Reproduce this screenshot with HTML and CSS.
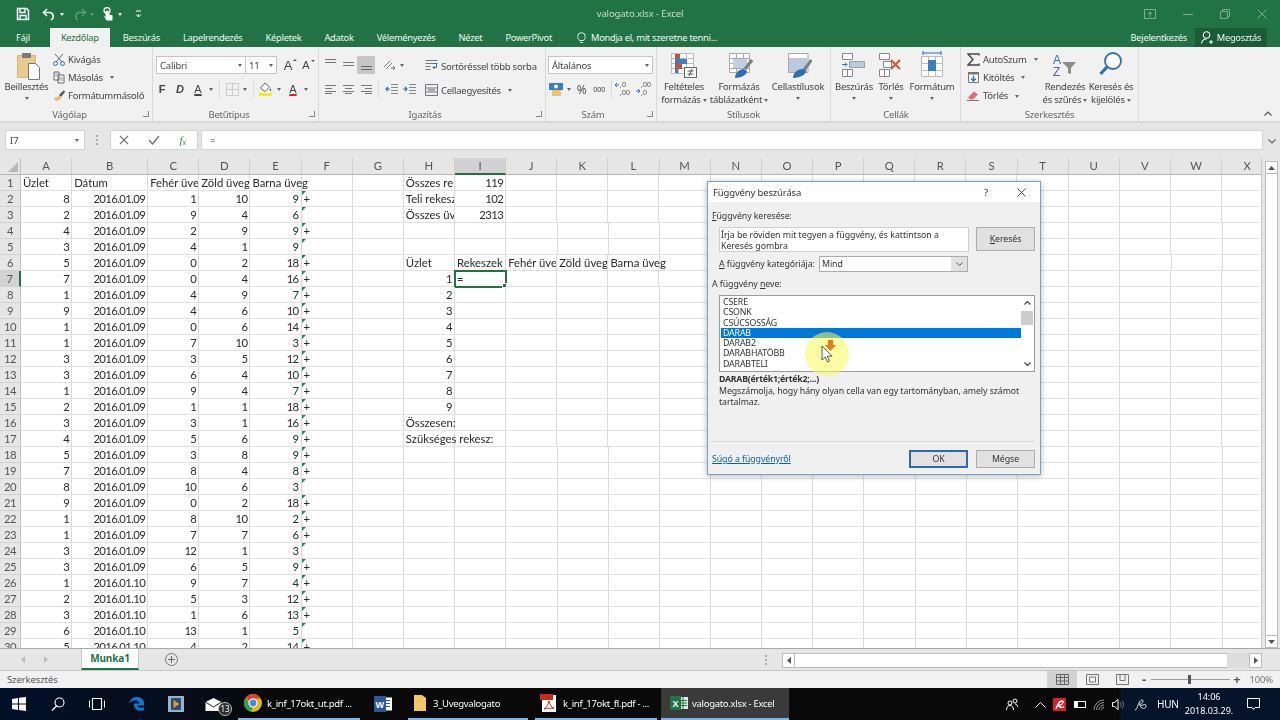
FILE: index.html
```html
<!DOCTYPE html>
<html lang="hu">
<head>
<meta charset="utf-8">
<title>valogato.xlsx - Excel</title>
<link rel="stylesheet" href="styles.css">
</head>
<body>
<div class="excel">
  <header class="titlebar">
    <div class="qat">
      <svg width="14" height="14" viewBox="0 0 14 14"><path d="M1.5 1.5h9l2 2v9h-11z" fill="none" stroke="#fff" stroke-width="1.5"/><path d="M4 1.5v4h5v-4M4 12.5v-4h6v4" fill="none" stroke="#fff" stroke-width="1.3"/></svg>
      <svg class="q1" width="14" height="13" viewBox="0 0 14 13"><path d="M5 1 1.5 4.5 5 8" fill="none" stroke="#fff" stroke-width="1.6"/><path d="M2 4.5h6a4 4 0 0 1 1 7.5" fill="none" stroke="#fff" stroke-width="1.6"/></svg>
      <i class="caret w"></i>
      <svg class="q2" width="14" height="13" viewBox="0 0 14 13"><path d="M9 1l3.5 3.5L9 8" fill="none" stroke="#5d9a78" stroke-width="1.5"/><path d="M12 4.5H6a4 4 0 0 0-1 7.5" fill="none" stroke="#5d9a78" stroke-width="1.5"/></svg>
      <i class="caret dim"></i>
      <svg class="q3" width="12" height="15" viewBox="0 0 12 15"><circle cx="5" cy="3.5" r="3" fill="none" stroke="#fff" stroke-width="1.3"/><path d="M3.5 4v6l-2-1.5 3 5h6V8.5L6.5 7V3.5" fill="#fff"/></svg>
      <i class="caret w"></i>
      <svg class="q4" width="7" height="8" viewBox="0 0 7 8"><path d="M1 1h5M3.5 4v3M1 4.5 3.5 7 6 4.5" fill="none" stroke="#fff"/></svg>
    </div>
    <div class="doc-title">valogato.xlsx - Excel</div>
    <div class="winbtns">
      <svg width="12" height="10" viewBox="0 0 12 10"><path d="M.5.5h11v9H.5zM6 8V3M4 5l2-2 2 2" fill="none" stroke="#7fae95"/></svg>
      <svg width="10" height="10" viewBox="0 0 10 10"><path d="M0 5.5h10" stroke="#7fae95"/></svg>
      <svg width="10" height="10" viewBox="0 0 10 10"><path d="M.5 2.5h7v7h-7zM2.5 2.5v-2h7v7h-2" fill="none" stroke="#7fae95"/></svg>
      <svg width="10" height="10" viewBox="0 0 10 10"><path d="M.5.5l9 9M9.5.5l-9 9" fill="none" stroke="#7fae95"/></svg>
    </div>
  </header>

  <nav class="tabs">
    <span class="tab t-file">Fájl</span>
    <span class="tab t-active">Kezdőlap</span>
    <span class="tab">Beszúrás</span>
    <span class="tab">Lapelrendezés</span>
    <span class="tab">Képletek</span>
    <span class="tab">Adatok</span>
    <span class="tab">Véleményezés</span>
    <span class="tab">Nézet</span>
    <span class="tab">PowerPivot</span>
    <span class="tab t-tell"><svg width="9" height="12" viewBox="0 0 9 12"><path d="M2.5 8.5C1.5 7 .7 6.2.7 4.5a3.8 3.8 0 0 1 7.6 0c0 1.700-.8 2.500-1.800 4zM3 10.500h3" fill="none" stroke="#fff" stroke-width=".9"/></svg>Mondja el, mit szeretne tenni...</span>
    <span class="tab t-login">Bejelentkezés</span>
    <span class="tab t-share"><svg width="12" height="13" viewBox="0 0 12 13"><circle cx="5.500" cy="4" r="3.200" fill="none" stroke="#fff" stroke-width="1.100"/><path d="M.5 12.500c.5-3 2-4.500 5-4.500M8 11h4M10 9v4" fill="none" stroke="#fff" stroke-width="1.100"/></svg>Megosztás</span>
  </nav>

  <section class="ribbon">
    <div class="grp g1">
      <div class="body">
        <div class="big w47">
          <svg class="bi" width="26" height="30" viewBox="0 0 26 30"><rect x="3.500" y="5.500" width="18" height="22" fill="#e9c98c" stroke="#d8b877"/><rect x="8" y="3" width="9" height="5" fill="#7a7a7a"/><path d="M14.500 13.500h7l4 4v12h-11z" fill="#fff" stroke="#777"/></svg>
          <span>Beillesztés</span><i class="caret"></i>
        </div>
        <div class="col">
          <div class="sm"><svg width="12" height="13" viewBox="0 0 12 13"><path d="M2 1l7 8M10 1 3 9" stroke="#666" fill="none"/><circle cx="2.500" cy="10.500" r="2" fill="none" stroke="#2f6fb0"/><circle cx="9.500" cy="10.500" r="2" fill="none" stroke="#2f6fb0"/></svg>Kivágás</div>
          <div class="sm"><svg width="12" height="13" viewBox="0 0 12 13"><path d="M1 1h5v8H1zM5 4h6v8H5z" fill="#fff" stroke="#666"/><path d="M2 3h3M2 5h2M7 7h3M7 9h3" stroke="#8a8a8a" fill="none"/></svg>Másolás <i class="caret ml"></i></div>
          <div class="sm"><svg width="12" height="13" viewBox="0 0 12 13"><path d="M6 6 11 1l1 2-4 5z" fill="#555"/><path d="M7 7 1 9l2 3 5-2z" fill="#e9b95e"/></svg>Formátummásoló</div>
        </div>
      </div>
      <div class="foot"><span class="lbl">Vágólap</span><span class="launch"></span></div>
    </div>

    <div class="grp g2">
      <div class="body stack">
        <div class="line">
          <div class="combo fontc"><span>Calibri</span><i class="caret"></i></div>
          <div class="combo sizec"><span>11</span><i class="caret"></i></div>
          <span class="fa a1">A<i class="up"></i></span>
          <span class="fa a2">A<i class="down"></i></span>
        </div>
        <div class="line fmt">
          <b class="ic">F</b>
          <b class="ic it">D</b>
          <span class="ic u">A</span><i class="caret nw"></i>
          <i class="vsep"></i>
          <span class="ic"><svg width="13" height="13" viewBox="0 0 13 13"><path d="M.5.5h12v12H.5zM6.500.5v12M.5 6.500h12" fill="none" stroke="#aaa" stroke-dasharray="1 1"/></svg></span><i class="caret nw"></i>
          <i class="vsep"></i>
          <span class="ic"><svg width="14" height="14" viewBox="0 0 14 14"><path d="M6 1 1.500 6 6 9.500 10.500 5z" fill="#fff" stroke="#666"/><path d="M11 6c1 1.300 1.700 2.200 1 3-.8.500-1.600-.3-1-3" fill="#2f6fb0"/><rect y="11" width="13" height="3" fill="#ffea1f"/></svg></span><i class="caret nw"></i>
          <span class="ic u red">A</span><i class="caret nw"></i>
        </div>
      </div>
      <div class="foot"><span class="lbl">Betűtípus</span><span class="launch"></span></div>
    </div>

    <div class="grp g3">
      <div class="body">
        <div class="alignc">
          <div class="line">
            <span class="ic"><svg class="tl" width="11" height="9" viewBox="0 0 11 9"><path d="M0 .5h11M0 3.500h11" stroke="#777"/></svg></span>
            <span class="ic"><svg class="tl" width="11" height="9" viewBox="0 0 11 9"><path d="M0 3.500h11M0 6.500h11" stroke="#777"/></svg></span>
            <span class="ic on"><svg width="11" height="9" viewBox="0 0 11 9"><path d="M0 5.500h11M0 8.500h11" stroke="#666"/></svg></span>
            <span class="ic ori"><svg width="14" height="12" viewBox="0 0 14 12"><path d="M2 8 8 2M4 10l6-6" stroke="#777" fill="none"/><path d="M9 9h4M11 7l2 2-2 2" stroke="#777" fill="none"/></svg></span><i class="caret nw"></i>
          </div>
          <div class="line l2">
            <span class="ic"><svg width="11" height="9" viewBox="0 0 11 9"><path d="M0 .5h11M0 3.500h7M0 6.500h11M0 8.500h7" stroke="#777"/></svg></span>
            <span class="ic"><svg width="11" height="9" viewBox="0 0 11 9"><path d="M0 .5h11M2 3.500h7M0 6.500h11M2 8.500h7" stroke="#777"/></svg></span>
            <span class="ic"><svg width="11" height="9" viewBox="0 0 11 9"><path d="M0 .5h11M4 3.500h7M0 6.500h11M4 8.500h7" stroke="#777"/></svg></span>
            <i class="vsep s2"></i>
            <span class="ic"><svg width="13" height="11" viewBox="0 0 13 11"><path d="M6 .5h7M6 3.500h7M6 6.500h7M6 9.500h7" stroke="#888"/><path d="M5 5H1M3 3 1 5l2 2" stroke="#2f6fb0" fill="none" stroke-width="1.200"/></svg></span>
            <span class="ic"><svg width="13" height="11" viewBox="0 0 13 11"><path d="M6 .5h7M6 3.500h7M6 6.500h7M6 9.500h7" stroke="#888"/><path d="M0 5h4M2 3l2 2-2 2" stroke="#2f6fb0" fill="none" stroke-width="1.200"/></svg></span>
          </div>
        </div>
        <div class="wrapc">
          <div class="sm"><svg width="13" height="12" viewBox="0 0 13 12"><path d="M.5.5h12M.5 3.500h12M.5 6.500h5M.5 9.500h5" stroke="#777" fill="none"/><path d="M9 3.500h2.500v4H8M9.500 6 8 7.500 9.500 9" stroke="#2f6fb0" fill="none"/></svg>Sortöréssel több sorba</div>
          <div class="sm"><svg width="13" height="12" viewBox="0 0 13 12"><path d="M.5.5h12v11H.5zM.5 4h12M.5 8h12" stroke="#777" fill="none"/><path d="M3 6h7" stroke="#2f6fb0"/></svg>Cellaegyesítés <i class="caret ml2"></i></div>
        </div>
      </div>
      <div class="foot"><span class="lbl">Igazítás</span><span class="launch"></span></div>
    </div>

    <div class="grp g4">
      <div class="body stack">
        <div class="line"><div class="combo numc"><span>Általános</span><i class="caret"></i></div></div>
        <div class="line fmt2">
          <span class="ic"><svg width="14" height="13" viewBox="0 0 14 13"><rect width="14" height="7" fill="#3a7fc1"/><rect x="3" y="7" width="9" height="6" fill="#eec26d"/><circle cx="7" cy="3.500" r="2" fill="#fff"/></svg></span><i class="caret nw"></i>
          <span class="pct">%</span>
          <span class="th">000</span>
          <i class="vsep s3"></i>
          <span class="dec"><svg width="16" height="13" viewBox="0 0 16 13"><path d="M5 3H1M3 1 1 3l2 2" stroke="#2f6fb0" fill="none"/></svg><em>,0<br>,00</em></span>
          <span class="dec"><svg width="16" height="13" viewBox="0 0 16 13"><path d="M1 9h4M3 7l2 2-2 2" stroke="#2f6fb0" fill="none"/></svg><em>,00<br>,0</em></span>
        </div>
      </div>
      <div class="foot"><span class="lbl">Szám</span><span class="launch"></span></div>
    </div>

    <div class="grp g5">
      <div class="body">
        <div class="big w48">
          <svg class="bi" width="28" height="30" viewBox="0 0 28 30"><path d="M1.500 3.500h22v20h-22zM1.500 8.500h22M1.500 13.500h22M1.500 18.500h22M8.500 3.500v20M16.500 3.500v20" fill="#fff" stroke="#bbb"/><rect x="5" y="4" width="5" height="5" fill="#c9503f"/><rect x="5" y="9" width="12" height="5" fill="#3a7fc1"/><rect x="5" y="14" width="7" height="5" fill="#c9503f"/><rect x="5" y="19" width="3" height="4" fill="#3a7fc1"/><rect x="14.500" y="17.500" width="12" height="10" fill="#fff" stroke="#666"/><path d="M17.500 21h6M17.500 24h6M22 19l-3 7" stroke="#555" fill="none"/></svg>
          <span>Feltételes</span><span>formázás <i class="caret"></i></span>
        </div>
        <div class="big w62">
          <svg class="bi" width="28" height="30" viewBox="0 0 28 30"><path d="M4.500 3.500h20v19h-20zM4.500 8.500h20M4.500 13.500h20M4.500 18.500h20M11.500 3.500v19M18.500 3.500v19" fill="#fff" stroke="#aaa"/><rect x="8" y="9" width="14" height="9" fill="#c3cfe0"/><path d="M27 10l-7 9" stroke="#7d7d7d" stroke-width="3" fill="none"/><path d="M10 28c0-5 4-9 9-9l3 2c0 4-6 7-12 7" fill="#2f6fb0"/></svg>
          <span>Formázás</span><span>táblázatként <i class="caret"></i></span>
        </div>
        <div class="big w56">
          <svg class="bi" width="28" height="30" viewBox="0 0 28 30"><path d="M4.500 3.500h19.500v19H4.500z" fill="#fff" stroke="#aaa"/><rect x="5" y="8" width="18.500" height="14" fill="#bcc9dd"/><path d="M27.500 10 20 20" stroke="#7d7d7d" stroke-width="3" fill="none"/><path d="M9 28c0-5 4-9 10-9l3 2c0 4-7 7-13 7" fill="#2f6fb0"/></svg>
          <span>Cellastílusok</span><i class="caret"></i>
        </div>
      </div>
      <div class="foot"><span class="lbl">Stílusok</span></div>
    </div>

    <div class="grp g6">
      <div class="body">
        <div class="big w40">
          <svg class="bi" width="26" height="30" viewBox="0 0 26 30"><path d="M1.500 3.500h10v6h-10zM1.500 19.500h10v7h-10zM6.500 19.500v7" fill="#fff" stroke="#888"/><rect x="8.500" y="11.500" width="15" height="6" fill="#bcc9dd" stroke="#8aa"/><path d="M1 14.500h5M4 12.500l2 2-2 2" stroke="#2f6fb0" fill="none"/></svg>
          <span>Beszúrás</span><i class="caret"></i>
        </div>
        <div class="big w34">
          <svg class="bi" width="26" height="30" viewBox="0 0 26 30"><path d="M1.500 3.500h10v6h-10zM1.500 19.500h10v7h-10zM6.500 19.500v7M5.500 11.500h8v6h-8z" fill="#fff" stroke="#888"/><path d="M13 10l9 9M22 10l-9 9" stroke="#d9513c" stroke-width="2"/></svg>
          <span>Törlés</span><i class="caret"></i>
        </div>
        <div class="big w48b">
          <svg class="bi" width="26" height="30" viewBox="0 0 26 30"><path d="M2.500 6.500h21v20h-21zM2.500 13.500h21M2.500 20.500h21M9.500 6.500v20M16.500 6.500v20" fill="#fff" stroke="#bbb"/><rect x="9" y="10" width="8" height="11" fill="#3a7fc1"/><path d="M4 3h18M4 1v4M22 1v4" stroke="#2f6fb0" fill="none"/></svg>
          <span>Formátum</span><i class="caret"></i>
        </div>
      </div>
      <div class="foot"><span class="lbl">Cellák</span></div>
    </div>

    <div class="grp g7">
      <div class="body">
        <div class="col c7">
          <div class="sm"><svg width="13" height="13" viewBox="0 0 13 13"><path d="M12 2.500V1H1l5 5.500L1 12h11v-1.500" fill="none" stroke="#444" stroke-width="1.400"/></svg>AutoSzum <i class="caret ml3"></i></div>
          <div class="sm"><svg width="13" height="13" viewBox="0 0 13 13"><path d="M1.500 1.500h10v10h-10z" fill="#fff" stroke="#777"/><rect x="1" y="1" width="11" height="2.500" fill="#777"/><path d="M6.500 4.500v5M4 7.500l2.500 2.500L9 7.500" fill="none" stroke="#2f6fb0" stroke-width="1.400"/></svg>Kitöltés <i class="caret"></i></div>
          <div class="sm"><svg width="13" height="13" viewBox="0 0 13 13"><path d="M1 8.500 7 2.500l4 3-5 5H3.500z" fill="#e66b7a"/><path d="M0 11.500h12" stroke="#777"/></svg>Törlés <i class="caret"></i></div>
        </div>
        <div class="big w46">
          <svg class="bi" width="26" height="30" viewBox="0 0 26 30"><text x="1" y="14" class="az a">A</text><text x="1" y="26" class="az z">Z</text><path d="M10 12h14l-5 6v6l-3-1v-5z" fill="#8a8a8a"/></svg>
          <span>Rendezés</span><span>és szűrés <i class="caret"></i></span>
        </div>
        <div class="big w46">
          <svg class="bi" width="26" height="30" viewBox="0 0 26 30"><circle cx="15" cy="11" r="8" fill="#fff" stroke="#2f6fb0" stroke-width="1.800"/><path d="M9 17 2.500 24" stroke="#2f6fb0" stroke-width="3.200"/></svg>
          <span>Keresés és</span><span>kijelölés <i class="caret"></i></span>
        </div>
      </div>
      <div class="foot"><span class="lbl">Szerkesztés</span></div>
    </div>

    <div class="collapse"><svg width="8" height="5" viewBox="0 0 8 5"><path d="M.5 4.500 4 1l3.500 3.500" fill="none" stroke="#555" stroke-width="1.200"/></svg></div>
  </section>

  <section class="fbar">
    <div class="namebox"><span>I7</span><i class="caret"></i></div>
    <div class="dots"></div>
    <div class="fbtns">
      <svg width="10" height="10" viewBox="0 0 10 10"><path d="M1 1l8 8M9 1 1 9" stroke="#777" stroke-width="1.200"/></svg>
      <svg width="12" height="10" viewBox="0 0 12 10"><path d="M1 5l3.500 4L11 1" fill="none" stroke="#777" stroke-width="1.400"/></svg>
      <span class="fx">f<sub>x</sub></span>
    </div>
    <div class="finput">=</div>
    <div class="fchev"><svg width="8" height="5" viewBox="0 0 8 5"><path d="M.5.5 4 4 7.500.5" fill="none" stroke="#666" stroke-width="1.200"/></svg></div>
  </section>

  <section class="sheet">
    <div class="gridwrap">
      <div class="row head">
        <div class="rh corner"><i></i></div>
        <div class="ch">A</div><div class="ch b">B</div><div class="ch">C</div><div class="ch">D</div><div class="ch">E</div><div class="ch">F</div><div class="ch">G</div><div class="ch">H</div><div class="ch act">I</div><div class="ch">J</div><div class="ch">K</div><div class="ch">L</div><div class="ch">M</div><div class="ch">N</div><div class="ch">O</div><div class="ch">P</div><div class="ch">Q</div><div class="ch">R</div><div class="ch">S</div><div class="ch">T</div><div class="ch">U</div><div class="ch">V</div><div class="ch">W</div><div class="ch">X</div>
      </div>
      <div class="row"><div class="rh">1</div><div class="c">Üzlet</div><div class="c b">Dátum</div><div class="c clip">Fehér üveg</div><div class="c clip">Zöld üveg</div><div class="c">Barna üveg</div><div class="c"></div><div class="c"></div><div class="c clip">Összes rekesz</div><div class="c n">119</div><div class="rest"></div></div>
      <div class="row"><div class="rh">2</div><div class="c n">8</div><div class="c b n">2016.01.09</div><div class="c n">1</div><div class="c n">10</div><div class="c n">9</div><div class="c f">+</div><div class="c"></div><div class="c clip">Teli rekesz</div><div class="c n">102</div><div class="rest"></div></div>
      <div class="row"><div class="rh">3</div><div class="c n">2</div><div class="c b n">2016.01.09</div><div class="c n">9</div><div class="c n">4</div><div class="c n">6</div><div class="c f"></div><div class="c"></div><div class="c clip">Összes üveg</div><div class="c n">2313</div><div class="rest"></div></div>
      <div class="row"><div class="rh">4</div><div class="c n">4</div><div class="c b n">2016.01.09</div><div class="c n">2</div><div class="c n">9</div><div class="c n">9</div><div class="c f">+</div><div class="rest"></div></div>
      <div class="row"><div class="rh">5</div><div class="c n">3</div><div class="c b n">2016.01.09</div><div class="c n">4</div><div class="c n">1</div><div class="c n">9</div><div class="c f"></div><div class="rest"></div></div>
      <div class="row"><div class="rh">6</div><div class="c n">5</div><div class="c b n">2016.01.09</div><div class="c n">0</div><div class="c n">2</div><div class="c n">18</div><div class="c f">+</div><div class="c"></div><div class="c">Üzlet</div><div class="c">Rekeszek</div><div class="c clip">Fehér üveg</div><div class="c clip">Zöld üveg</div><div class="c">Barna üveg</div><div class="rest"></div></div>
      <div class="row"><div class="rh actr">7</div><div class="c n">7</div><div class="c b n">2016.01.09</div><div class="c n">0</div><div class="c n">4</div><div class="c n">16</div><div class="c f">+</div><div class="c"></div><div class="c n">1</div><div class="c sel">=</div><div class="rest"></div></div>
      <div class="row"><div class="rh">8</div><div class="c n">1</div><div class="c b n">2016.01.09</div><div class="c n">4</div><div class="c n">9</div><div class="c n">7</div><div class="c f">+</div><div class="c"></div><div class="c n">2</div><div class="rest"></div></div>
      <div class="row"><div class="rh">9</div><div class="c n">9</div><div class="c b n">2016.01.09</div><div class="c n">4</div><div class="c n">6</div><div class="c n">10</div><div class="c f">+</div><div class="c"></div><div class="c n">3</div><div class="rest"></div></div>
      <div class="row"><div class="rh">10</div><div class="c n">1</div><div class="c b n">2016.01.09</div><div class="c n">0</div><div class="c n">6</div><div class="c n">14</div><div class="c f">+</div><div class="c"></div><div class="c n">4</div><div class="rest"></div></div>
      <div class="row"><div class="rh">11</div><div class="c n">1</div><div class="c b n">2016.01.09</div><div class="c n">7</div><div class="c n">10</div><div class="c n">3</div><div class="c f">+</div><div class="c"></div><div class="c n">5</div><div class="rest"></div></div>
      <div class="row"><div class="rh">12</div><div class="c n">3</div><div class="c b n">2016.01.09</div><div class="c n">3</div><div class="c n">5</div><div class="c n">12</div><div class="c f">+</div><div class="c"></div><div class="c n">6</div><div class="rest"></div></div>
      <div class="row"><div class="rh">13</div><div class="c n">3</div><div class="c b n">2016.01.09</div><div class="c n">6</div><div class="c n">4</div><div class="c n">10</div><div class="c f">+</div><div class="c"></div><div class="c n">7</div><div class="rest"></div></div>
      <div class="row"><div class="rh">14</div><div class="c n">1</div><div class="c b n">2016.01.09</div><div class="c n">9</div><div class="c n">4</div><div class="c n">7</div><div class="c f">+</div><div class="c"></div><div class="c n">8</div><div class="rest"></div></div>
      <div class="row"><div class="rh">15</div><div class="c n">2</div><div class="c b n">2016.01.09</div><div class="c n">1</div><div class="c n">1</div><div class="c n">18</div><div class="c f">+</div><div class="c"></div><div class="c n">9</div><div class="rest"></div></div>
      <div class="row"><div class="rh">16</div><div class="c n">3</div><div class="c b n">2016.01.09</div><div class="c n">3</div><div class="c n">1</div><div class="c n">16</div><div class="c f">+</div><div class="c"></div><div class="c">Összesen:</div><div class="rest"></div></div>
      <div class="row"><div class="rh">17</div><div class="c n">4</div><div class="c b n">2016.01.09</div><div class="c n">5</div><div class="c n">6</div><div class="c n">9</div><div class="c f">+</div><div class="c"></div><div class="c">Szükséges rekesz:</div><div class="rest"></div></div>
      <div class="row"><div class="rh">18</div><div class="c n">5</div><div class="c b n">2016.01.09</div><div class="c n">3</div><div class="c n">8</div><div class="c n">9</div><div class="c f">+</div><div class="rest"></div></div>
      <div class="row"><div class="rh">19</div><div class="c n">7</div><div class="c b n">2016.01.09</div><div class="c n">8</div><div class="c n">4</div><div class="c n">8</div><div class="c f">+</div><div class="rest"></div></div>
      <div class="row"><div class="rh">20</div><div class="c n">8</div><div class="c b n">2016.01.09</div><div class="c n">10</div><div class="c n">6</div><div class="c n">3</div><div class="c f"></div><div class="rest"></div></div>
      <div class="row"><div class="rh">21</div><div class="c n">9</div><div class="c b n">2016.01.09</div><div class="c n">0</div><div class="c n">2</div><div class="c n">18</div><div class="c f">+</div><div class="rest"></div></div>
      <div class="row"><div class="rh">22</div><div class="c n">1</div><div class="c b n">2016.01.09</div><div class="c n">8</div><div class="c n">10</div><div class="c n">2</div><div class="c f">+</div><div class="rest"></div></div>
      <div class="row"><div class="rh">23</div><div class="c n">1</div><div class="c b n">2016.01.09</div><div class="c n">7</div><div class="c n">7</div><div class="c n">6</div><div class="c f">+</div><div class="rest"></div></div>
      <div class="row"><div class="rh">24</div><div class="c n">3</div><div class="c b n">2016.01.09</div><div class="c n">12</div><div class="c n">1</div><div class="c n">3</div><div class="c f"></div><div class="rest"></div></div>
      <div class="row"><div class="rh">25</div><div class="c n">3</div><div class="c b n">2016.01.09</div><div class="c n">6</div><div class="c n">5</div><div class="c n">9</div><div class="c f">+</div><div class="rest"></div></div>
      <div class="row"><div class="rh">26</div><div class="c n">1</div><div class="c b n">2016.01.10</div><div class="c n">9</div><div class="c n">7</div><div class="c n">4</div><div class="c f">+</div><div class="rest"></div></div>
      <div class="row"><div class="rh">27</div><div class="c n">2</div><div class="c b n">2016.01.10</div><div class="c n">5</div><div class="c n">3</div><div class="c n">12</div><div class="c f">+</div><div class="rest"></div></div>
      <div class="row"><div class="rh">28</div><div class="c n">3</div><div class="c b n">2016.01.10</div><div class="c n">1</div><div class="c n">6</div><div class="c n">13</div><div class="c f">+</div><div class="rest"></div></div>
      <div class="row"><div class="rh">29</div><div class="c n">6</div><div class="c b n">2016.01.10</div><div class="c n">13</div><div class="c n">1</div><div class="c n">5</div><div class="c f"></div><div class="rest"></div></div>
      <div class="row"><div class="rh">30</div><div class="c n">5</div><div class="c b n">2016.01.10</div><div class="c n">4</div><div class="c n">2</div><div class="c n">14</div><div class="c f">+</div><div class="rest"></div></div>
    </div>
    <div class="vscroll">
      <div class="sb"><svg width="7" height="4" viewBox="0 0 7 4"><path d="M3.500 0 7 4H0z" fill="#555"/></svg></div>
      <div class="sbtrack"></div>
      <div class="sb"><svg width="7" height="4" viewBox="0 0 7 4"><path d="M0 0h7L3.500 4z" fill="#555"/></svg></div>
    </div>
  </section>

  <section class="sheetbar">
    <div class="nav"><svg width="4" height="7" viewBox="0 0 4 7"><path d="M4 0v7L0 3.500z" fill="#bbb"/></svg><svg width="4" height="7" viewBox="0 0 4 7"><path d="M0 0v7l4-3.500z" fill="#bbb"/></svg></div>
    <div class="stab">Munka1</div>
    <div class="addsheet"><svg width="13" height="13" viewBox="0 0 13 13"><circle cx="6.500" cy="6.500" r="6" fill="none" stroke="#777"/><path d="M3 6.500h7M6.500 3v7" stroke="#666"/></svg></div>
    <div class="spacer"></div>
    <div class="dots2"></div>
    <div class="hscroll">
      <div class="hb"><svg width="4" height="7" viewBox="0 0 4 7"><path d="M4 0v7L0 3.500z" fill="#555"/></svg></div>
      <div class="hthumb"></div>
      <div class="htrack"></div>
      <div class="hb"><svg width="4" height="7" viewBox="0 0 4 7"><path d="M0 0v7l4-3.500z" fill="#555"/></svg></div>
    </div>
  </section>

  <footer class="status">
    <span class="st-text">Szerkesztés</span>
    <div class="spacer"></div>
    <div class="views">
      <span class="vw on"><svg width="13" height="11" viewBox="0 0 13 11"><path d="M.5.5h12v10H.5zM4.500.5v10M8.500.5v10M.5 3.500h12M.5 7h12" fill="none" stroke="#666"/></svg></span>
      <span class="vw"><svg width="13" height="11" viewBox="0 0 13 11"><path d="M.5.5h12v10H.5zM3.500 3h6v5h-6z" fill="none" stroke="#777"/></svg></span>
      <span class="vw"><svg width="13" height="11" viewBox="0 0 13 11"><path d="M.5.5h12v10H.5zM4 .5v6h5V.5" fill="none" stroke="#777"/></svg></span>
    </div>
    <div class="zoom">
      <span class="zb">-</span>
      <span class="slider"><i></i></span>
      <span class="zb">+</span>
    </div>
    <span class="pctz">100%</span>
  </footer>

  <div class="taskbar">
    <span class="tb w38"><svg width="14" height="14" viewBox="0 0 14 14"><path d="M0 2l6-1v5.500H0zM7 .8 14 0v6.500H7zM0 7.500h6V13l-6-1zM7 7.500h7V14l-7-1z" fill="#fff"/></svg></span>
    <span class="tb w39"><svg width="14" height="14" viewBox="0 0 14 14"><circle cx="8.500" cy="5.500" r="4.500" fill="none" stroke="#fff" stroke-width="1.100"/><path d="M5.500 9 1 13.500" stroke="#fff" stroke-width="1.300"/></svg></span>
    <span class="tb w39"><svg width="16" height="12" viewBox="0 0 16 12"><path d="M3.500.5h9v11h-9zM.5 2.500v7M15.500 2.500v7" fill="none" stroke="#fff" stroke-width="1.100"/></svg></span>
    <span class="tb w41"><svg width="16" height="16" viewBox="0 0 16 16"><path d="M8.200 1C4 1 1 3.500.5 7.500 2 5 4.500 4.200 6.500 4.200c2.600 0 3.700 1.400 3.800 3.200H4.800c-.2 3.800 2.400 7.400 6.500 7.400 1.500 0 2.800-.3 3.700-.9v-3c-3 1.700-6.300.9-6.800-1.500h7C15.800 5.500 13 1 8.200 1z" fill="#0f78d4"/></svg></span>
    <span class="tb w38"><svg width="16" height="16" viewBox="0 0 16 16"><rect width="16" height="16" fill="#9cb2c4"/><rect x="3" y="2" width="10" height="12" fill="#1f4f7a"/><path d="M5.500 4v8l6-4z" fill="#f0912c"/></svg></span>
    <span class="tb mail"><svg width="17" height="13" viewBox="0 0 16 13"><path d="M0 4 8 0l8 4v9H0z" fill="#fff"/><path d="M0 4l8 5 8-5" fill="none" stroke="#222"/></svg><em class="badge">13</em></span>
    <span class="tb tapp w122"><svg width="18" height="18" viewBox="0 0 18 18"><circle cx="9" cy="9" r="9" fill="#e3b521"/><path d="M9 0a9 9 0 0 1 7.800 4.500H9a4.500 4.500 0 0 0-4 2.500L1.800 3.500A9 9 0 0 1 9 0z" fill="#d8432f"/><path d="M1.800 3.500 5 9a4.500 4.500 0 0 0 4 4.500L6.500 17.600A9 9 0 0 1 1.800 3.500z" fill="#2f9e52"/><circle cx="9" cy="9" r="4" fill="#4a86e8" stroke="#fff" stroke-width="1.200"/></svg><span>k_inf_17okt_ut.pdf ...</span></span>
    <span class="tb word"><svg width="18" height="16" viewBox="0 0 18 16"><rect x="8" y="1.500" width="10" height="13" fill="#fff"/><path d="M10 4.500h6M10 7.500h6M10 10.500h6" stroke="#2b579a"/><rect width="12" height="16" fill="#2b579a"/><text x="1.500" y="12" class="logo">W</text></svg></span>
    <span class="tb tapp w122b"><svg width="12" height="16" viewBox="0 0 12 16"><path d="M0 0h8l4 3v13H0z" fill="#f1c766"/></svg><span>3_Uvegvalogato</span></span>
    <span class="tb tapp w126"><svg width="16" height="18" viewBox="0 0 16 18"><path d="M2 1h14v17H2z" fill="#fff"/><rect width="13" height="6" fill="#c9281c"/><path d="M9 7c-1 4-2 6-5 8 3-1 6-1 10-.5-3-1.500-4-4-5-7.500" fill="none" stroke="#c9281c"/></svg><span>k_inf_17okt_fl.pdf - ...</span></span>
    <span class="tb tapp active"><svg width="18" height="14" viewBox="0 0 18 14"><rect x="8" y="1" width="10" height="12" fill="#dfeee5"/><path d="M9 4.500h8M9 7h8M9 9.500h8M13 1v12" stroke="#217346" fill="none"/><rect width="11" height="14" fill="#217346"/><text x="2.500" y="11" class="logo">X</text></svg><span>valogato.xlsx - Excel</span></span>
    <div class="spacer"></div>
    <div class="tray">
      <svg width="12" height="12" viewBox="0 0 12 12"><circle cx="4" cy="5" r="2" fill="none" stroke="#fff"/><circle cx="9" cy="3" r="2" fill="none" stroke="#fff"/><path d="M.5 12c0-3 1.500-4.500 3.500-4.500S7.500 9 7.500 12M9 6c1.500 0 2.500 1 2.700 3" fill="none" stroke="#fff"/></svg>
      <svg class="tr1" width="11" height="7" viewBox="0 0 11 7"><path d="M.5 6.500 5.500 1.500l5 5" fill="none" stroke="#fff"/></svg>
      <span class="avira"><svg width="10" height="9" viewBox="0 0 10 9"><path d="M1 9C3 3 5 1 7 1s1.500 3-2 4 2 3 4 2" fill="none" stroke="#fff" stroke-width="1.400"/></svg></span>
      <svg class="trm" width="12" height="7" viewBox="0 0 12 7"><rect x=".5" y=".5" width="11" height="6" fill="none" stroke="#fff"/><rect x="1" y="1" width="3" height="5" fill="#fff"/></svg>
      <svg class="trm" width="11" height="11" viewBox="0 0 11 11"><path d="M1 11a10 10 0 0 1 10-10M3.500 11A7.500 7.500 0 0 1 11 3.500M6 11a5 5 0 0 1 5-5M8.500 11A2.500 2.500 0 0 1 11 8.500" fill="none" stroke="#bbb" stroke-width=".8"/></svg>
      <svg class="trm" width="12" height="11" viewBox="0 0 12 11"><path d="M.5 3.500h2L6 .5v10l-3.500-3h-2z" fill="none" stroke="#fff"/><path d="M8 3a3.500 3.500 0 0 1 0 5M10 1.500a6 6 0 0 1 0 8" fill="none" stroke="#777"/></svg>
      <svg class="tr2" width="13" height="13" viewBox="0 0 13 13"><path d="M1 12c2 0 2-3 3-5s2-5 4-5 1 3-1 4 0 2 2 1 3-1 3 1-2 3-4 2-3-4-2-6" fill="none" stroke="#ddd"/></svg>
      <span class="lang">HUN</span>
      <span class="clock"><span>14:06</span><span>2018.03.29.</span></span>
      <svg class="tr3" width="13" height="13" viewBox="0 0 13 13"><path d="M.5.5h12v9H8L6.500 11.500 5 9.500H.5z" fill="none" stroke="#fff"/></svg>
    </div>
  </div>

  <div class="dialog">
    <div class="dlg-title"><span>Függvény beszúrása</span><span class="q">?</span><svg width="9" height="9" viewBox="0 0 9 9"><path d="M.5.5l8 8M8.500.5l-8 8" stroke="#555"/></svg></div>
    <div class="dlg-body">
      <div class="d-l"><u>F</u>üggvény keresése:</div>
      <div class="d-search">
        <div class="d-text">Írja be röviden mit tegyen a függvény, és kattintson a<br>Keresés gombra</div>
        <div class="d-btn"><u>K</u>eresés</div>
      </div>
      <div class="d-cat">
        <span><u>A</u> függvény kategóriája:</span>
        <div class="d-sel"><span>Mind</span><i><svg width="7" height="4" viewBox="0 0 7 4"><path d="M.5.500 3.500 3.500 6.500.5" fill="none" stroke="#555"/></svg></i></div>
      </div>
      <div class="d-l d-name">A függvény <u>n</u>eve:</div>
      <div class="d-list">
        <div class="d-items">
          <div>CSERE</div><div>CSONK</div><div>CSÚCSOSSÁG</div><div class="on">DARAB</div><div>DARAB2</div><div>DARABHATÖBB</div><div>DARABTELI</div>
        </div>
        <div class="d-sb">
          <svg width="7" height="4" viewBox="0 0 7 4"><path d="M.5 3.500 3.500.5l3 3" fill="none" stroke="#444" stroke-width="1.200"/></svg>
          <i></i>
          <svg width="7" height="4" viewBox="0 0 7 4"><path d="M.5.500 3.500 3.500l3-3" fill="none" stroke="#444" stroke-width="1.200"/></svg>
        </div>
      </div>
      <div class="d-sig">DARAB(érték1;érték2;...)</div>
      <div class="d-desc">Megszámolja, hogy hány olyan cella van egy tartományban, amely számot<br>tartalmaz.</div>
      <div class="d-foot">
        <span class="d-link">Súgó a függvényről</span>
        <div class="d-btn ok">OK</div>
        <div class="d-btn">Mégse</div>
      </div>
    </div>
    <div class="spot"></div>
    <svg class="pointer" width="22" height="24" viewBox="0 0 22 24"><path d="M7 0h5v5h3l-5.500 6L4 5h3z" fill="#ee7a1f"/><path d="M1 6v14l3.300-3 2.200 5 2-1-2.200-4.800H11z" fill="#fff" stroke="#333" stroke-width=".8"/></svg>
  </div>
</div>
</body>
</html>
```
FILE: styles.css
```css
* { box-sizing: border-box; }
html, body { margin: 0; padding: 0; height: 100%; overflow: hidden; }
body { font-family: "Noto Sans", "Liberation Sans", sans-serif; font-size: 9.5px; color: #444; background: #f1f1f1; }
i, em { font-style: normal; }
.excel { position: relative; width: 1280px; height: 720px; overflow: hidden; display: flex; flex-direction: column; filter: blur(.3px); }
.spacer { flex: 1; }

.caret { display: inline-block; width: 0; height: 0; border-left: 2.5px solid transparent; border-right: 2.5px solid transparent; border-top: 3px solid #666; vertical-align: middle; }
.caret.w { border-top-color: #fff; }
.caret.dim { border-top-color: #5d9a78; }
.caret.ml { margin-left: 7px; }
.caret.ml2 { margin-left: 6px; }
.caret.ml3 { margin-left: 6px; }

/* title bar */
.titlebar { height: 28px; flex: none; background: #217346; display: flex; align-items: center; position: relative; }
.qat { display: flex; align-items: center; padding-left: 16px; }
.q1 { margin-left: 12px; margin-right: 4px; }
.q2 { margin-left: 9px; margin-right: 3px; }
.q3 { margin-left: 8px; margin-right: 4px; }
.q4 { margin-left: 13px; }
.doc-title { position: absolute; left: 0; right: 0; top: 7px; text-align: center; color: #c9ded2; font-size: 9.5px; letter-spacing: -.1px; }
.winbtns { margin-left: auto; display: flex; align-items: center; gap: 27px; padding-right: 13px; }

/* tabs */
.tabs { height: 19px; flex: none; background: #217346; display: flex; align-items: stretch; color: #fff; }
.tab { display: flex; align-items: center; margin-right: 23px; font-size: 9.3px; letter-spacing: -.26px; color: #f2f7f4; white-space: nowrap; }
.t-file { margin-left: 16px; margin-right: 20px; }
.t-active { background: #f1f1f1; color: #217346; width: 60px; justify-content: center; margin-right: 13px; }
.t-tell { margin-right: 0; margin-left: 2px; }
.t-tell svg { margin-right: 5px; }
.t-login { margin-left: auto; margin-right: 8px; }
.t-share { background: #1a5c38; width: 72px; margin-right: 13px; justify-content: center; gap: 4px; }

/* ribbon */
.ribbon { height: 75px; flex: none; background: #f1f1f1; display: flex; border-bottom: 1px solid #d6d6d6; box-shadow: 0 1px 1px #ddd; position: relative; z-index: 2; }
.grp { display: flex; flex-direction: column; border-right: 1px solid #d8d8d8; flex: none; }
.g1 { width: 153px; } .g2 { width: 166px; } .g3 { width: 227px; } .g4 { width: 111px; } .g5 { width: 174px; } .g6 { width: 130px; } .g7 { width: 178px; }
.body { height: 58px; padding-top: 3px; display: flex; flex: none; }
.body.stack { flex-direction: column; }
.foot { height: 16px; padding-top: 2px; display: flex; align-items: center; flex: none; }
.lbl { font-size: 9.5px; color: #666; letter-spacing: -.2px; text-align: center; flex: none; }
.g1 .lbl { width: 139px; } .g2 .lbl { width: 152px; } .g3 .lbl { width: 212px; } .g4 .lbl { width: 94px; } .g5 .lbl { width: 173px; } .g6 .lbl { width: 130px; } .g7 .lbl { width: 177px; }
.launch { margin-left: auto; width: 6px; height: 6px; margin-right: 3px; border-right: 1px solid #888; border-bottom: 1px solid #888; }

.big { display: flex; flex-direction: column; align-items: center; line-height: 13px; flex: none; white-space: nowrap; letter-spacing: -.25px; }
.bi { flex: none; height: 30px; }
.big > .caret { margin-top: 4px; }
.w47 { width: 47px; margin-left: 3px; } .w48 { width: 48px; margin-left: 3px; } .w62 { width: 62px; } .w56 { width: 56px; }
.w40 { width: 40px; margin-left: 3px; } .w34 { width: 34px; } .w48b { width: 48px; } .w46 { width: 46px; }

.col { display: flex; flex-direction: column; margin-left: 3px; }
.c7 { margin-left: 6px; width: 75px; }
.sm { height: 18.5px; display: flex; align-items: center; gap: 3px; white-space: nowrap; letter-spacing: -.25px; }
.sm .caret { margin-top: 1px; }
.sm .caret:last-child { margin-left: 4px; }

.line { display: flex; align-items: center; }
.g2 .body, .g4 .body { padding-top: 9px; }
.combo { height: 18px; background: #fff; border: 1px solid #c6c6c6; display: flex; align-items: center; padding: 0 3px; justify-content: space-between; font-size: 9.5px; letter-spacing: -.2px; }
.fontc { width: 90px; margin-left: 3px; }
.sizec { width: 32px; margin-left: -1px; }
.numc { width: 105px; margin-left: 2px; }
.fa { width: 18px; text-align: center; font-family: "Liberation Sans", sans-serif; color: #444; position: relative; display: inline-block; }
.a1 { font-size: 13px; margin-left: 2px; }
.a2 { font-size: 11px; }
.fa i { position: absolute; right: 0; top: 1px; width: 0; height: 0; border-left: 2px solid transparent; border-right: 2px solid transparent; }
.fa .up { border-bottom: 2.5px solid #555; }
.fa .down { border-top: 2.5px solid #555; }
.fmt { margin-top: 6px; }
.ic { width: 18px; height: 18px; display: inline-flex; align-items: center; justify-content: center; flex: none; font-size: 11px; color: #444; font-family: "Liberation Sans", sans-serif; }
.it { font-style: italic; }
.u { text-decoration: underline; text-decoration-thickness: 2px; text-underline-offset: 1px; }
.red { text-decoration-color: #e21a1a; }
.nw { margin: 0 3px 0 2px; flex: none; }
.vsep { width: 1px; height: 18px; background: #d8d8d8; margin: 0 3px; flex: none; }
.alignc { width: 105px; flex: none; padding: 6px 0 0 2px; }
.l2 { margin-top: 6px; }
.on { background: #c6c6c6; }
.tl { margin-top: -4px; }
.ori { margin-left: 5px; }
.s2 { margin: 0 3px 0 3px; }
.wrapc { margin-left: 1px; padding-top: 7px; }
.wrapc .sm { height: 30px; }
.wrapc .sm:first-child { height: 18px; }
.fmt2 { margin-top: 6px; padding-left: 1px; }
.pct { width: 18px; font-size: 12px; text-align: center; color: #555; }
.th { width: 20px; font-size: 7px; text-align: center; margin-left: 1px; }
.s3 { margin: 0 2px 0 3px; }
.dec { width: 21px; position: relative; height: 16px; flex: none; }
.dec svg { position: absolute; left: 0; top: 1px; }
.dec em { position: absolute; left: 6px; top: 0; font-size: 7px; line-height: 8px; color: #555; }
.az { font-family: "Liberation Sans", sans-serif; font-size: 12px; }
.az.a { fill: #2f6fb0; }
.az.z { fill: #7d4aa8; }
.collapse { flex: 1; display: flex; justify-content: flex-end; align-items: flex-end; padding: 0 8px 5px 0; }

/* formula bar */
.fbar { height: 36px; background: #e6e6e6; display: flex; align-items: center; padding: 0 0 0 5px; flex: none; }
.namebox { width: 80px; height: 20px; background: #fff; border: 1px solid #d4d4d4; display: flex; justify-content: space-between; align-items: center; padding: 0 5px 0 4px; font-size: 9.5px; }
.dots { width: 2px; height: 10px; margin: 0 12px 0 11px; border-left: 2px dotted #aaa; }
.fbtns { width: 88px; height: 20px; background: #fff; border: 1px solid #d4d4d4; display: flex; align-items: center; justify-content: space-between; padding: 0 11px 0 8px; }
.fx { font-family: "Liberation Serif", serif; font-style: italic; color: #3c8c5e; font-size: 11px; }
.fx sub { font-size: 8px; vertical-align: -1px; }
.finput { flex: none; width: 1062px; height: 20px; margin-left: 3px; background: #fff; border: 1px solid #d4d4d4; display: flex; align-items: center; padding-left: 8px; color: #333; }
.fchev { flex: 1; text-align: center; }

/* sheet */
.sheet { height: 490px; display: flex; background: #e6e6e6; flex: none; }
.gridwrap { width: 1262px; height: 490px; overflow: hidden; background: #fff; flex: none; border-right: 1px solid #c8c8c8; }
.row { display: flex; height: 16px; width: 1290px; font-family: Lato, "Liberation Sans", sans-serif; font-size: 11.3px; color: #2b2b2b; line-height: 15px; }
.head { height: 16.5px; background: #e6e6e6; color: #555; border-bottom: 1px solid #b5b5b5; }
.rh { width: 21px; flex: none; background: #e6e6e6; color: #555; text-align: center; border-right: 1px solid #c0c0c0; border-bottom: 1px solid #d2d2d2; letter-spacing: -.5px; }
.corner { position: relative; border-bottom: 0; }
.corner i { position: absolute; right: 2px; bottom: 2px; width: 0; height: 0; border-left: 10px solid transparent; border-bottom: 10px solid #b8b8b8; }
.actr { background: #d2d2d2; border-right: 2px solid #217346; }
.ch { width: 51.15px; flex: none; text-align: center; border-right: 1px solid #cfcfcf; }
.ch.b { width: 76px; }
.ch.act { background: #d2d2d2; border-bottom: 2px solid #217346; height: 16.5px; }
.c { width: 51.15px; flex: none; padding: 0 2px; border-right: 1px solid #dcdcdc; border-bottom: 1px solid #e2e2e2; white-space: nowrap; position: relative; }
.c.b { width: 76px; }
.n { text-align: right; letter-spacing: -.6px; }
.clip { overflow: hidden; }
.rest { flex: 1; border-bottom: 1px solid #e2e2e2; background: repeating-linear-gradient(to right, transparent 0, transparent 50.15px, #dcdcdc 50.15px, #dcdcdc 51.15px); }
.f::before { content: ""; position: absolute; left: 0; top: 0; width: 0; height: 0; border-top: 4px solid #1e8a3c; border-right: 4px solid transparent; }
.sel { outline: 2px solid #217346; outline-offset: -1px; }
.sel::after { content: ""; position: absolute; right: -2px; bottom: -2px; background: #217346; border: 1px solid #fff; box-sizing: content-box; width: 3px; height: 3px; }
.vscroll { flex: 1; padding: 3px 2px 0 3px; display: flex; flex-direction: column; }
.sb { height: 13px; background: #fff; border: 1px solid #bcbcbc; display: flex; align-items: center; justify-content: center; flex: none; }
.sbtrack { flex: 1; background: #fff; border-left: 1px solid #bcbcbc; border-right: 1px solid #bcbcbc; }

/* sheet tabs */
.sheetbar { height: 23px; background: #e6e6e6; border-top: 1px solid #a8a8a8; border-bottom: 1px solid #c8c8c8; display: flex; align-items: stretch; flex: none; }
.nav { width: 81px; padding-left: 21px; display: flex; align-items: center; gap: 19px; }
.stab { width: 58px; background: #fff; border: 1px solid #c8c8c8; border-top: 0; border-bottom: 2px solid #217346; color: #217346; font-weight: 700; text-align: center; font-size: 10px; line-height: 19px; letter-spacing: -.1px; }
.addsheet { margin-left: 26px; display: flex; align-items: center; }
.dots2 { width: 2px; height: 10px; align-self: center; border-left: 2px dotted #aaa; margin-right: 15px; }
.hscroll { width: 480px; margin: 4px 18px 2px 0; display: flex; }
.hb { width: 13px; background: #fff; border: 1px solid #bcbcbc; display: flex; align-items: center; justify-content: center; flex: none; }
.hthumb { flex: 1; background: #fff; border-top: 1px solid #bcbcbc; border-bottom: 1px solid #bcbcbc; }
.htrack { width: 22px; background: #dcdcdc; }

/* status */
.status { height: 17px; background: #f1f1f1; display: flex; align-items: center; flex: none; }
.st-text { margin-left: 7px; color: #555; letter-spacing: -.1px; }
.views { display: flex; height: 17px; }
.vw { width: 30px; display: flex; align-items: center; justify-content: center; }
.vw.on { background: #d2d2d2; }
.zoom { display: flex; align-items: center; margin-left: 1px; }
.zb { width: 12px; text-align: center; font-size: 13px; font-weight: 700; color: #555; line-height: 13px; }
.slider { width: 79px; height: 1px; background: #999; position: relative; margin: 0 1px; }
.slider i { position: absolute; left: 37px; top: -4px; width: 3px; height: 9px; background: #555; }
.pctz { width: 37px; text-align: right; padding-right: 7px; color: #777; letter-spacing: -.2px; }

/* taskbar */
.taskbar { height: 32px; flex: none; display: flex; align-items: center; color: #fff; background: linear-gradient(90deg, #03102a 0, #040c18 200px, #090909 260px, #090909 1118px, #05142a 1122px, #05142a 1280px); }
.tb { height: 32px; display: flex; align-items: center; justify-content: center; flex: none; position: relative; font-size: 9.5px; white-space: nowrap; letter-spacing: -.3px; }
.w38 { width: 38px; } .w39 { width: 39px; } .w41 { width: 41px; }
.tapp { gap: 5px; border-bottom: 2px solid #7fb6e6; justify-content: flex-start; padding-left: 6px; }
.w122 { width: 122px; }
.w122b { width: 120px; margin-left: 2px; gap: 7px; }
.w126 { width: 122px; margin-left: 7px; padding-left: 5px; gap: 7px; }
.active { width: 128px; margin-left: 4px; background: #3a3a3a; padding-left: 9px; gap: 4px; }
.word { width: 46px; }
.mail { justify-content: flex-start; padding-left: 10px; width: 43px; }
.badge { position: absolute; left: 23px; top: 14px; width: 14px; height: 14px; border-radius: 50%; background: #2d2d2d; border: 1px solid #bbb; font-size: 8px; line-height: 12px; text-align: center; letter-spacing: 0; }
.logo { font-family: "Liberation Sans", sans-serif; font-size: 9px; font-weight: 700; fill: #fff; }
.tray { display: flex; align-items: center; padding-right: 20px; }
.tr1 { margin-left: 17.5px; }
.avira { margin-left: 7px; width: 13px; height: 13px; background: #d8202a; display: flex; align-items: center; justify-content: center; }
.trm { margin-left: 7.5px; }
.tr2 { margin-left: 10.5px; }
.lang { font-size: 10px; margin-left: 10px; width: 21px; letter-spacing: -.2px; }
.clock { display: flex; flex-direction: column; align-items: center; font-size: 9px; line-height: 14px; margin-left: 4px; width: 54px; }
.tr3 { margin-left: 11px; }

/* dialog */
.dialog { position: absolute; left: 707px; top: 181px; width: 334px; height: 294px; background: #f0f0f0; border: 1px solid #7ba3c7; box-shadow: 0 1px 6px rgba(0,0,0,.3); font-family: "Noto Sans", sans-serif; font-size: 8.8px; color: #333; letter-spacing: -.08px; z-index: 5; }
.dlg-title { height: 20px; background: #fff; display: flex; align-items: center; padding: 0 14px 0 5px; font-size: 9.5px; letter-spacing: -.15px; }
.dlg-title .q { margin-left: auto; margin-right: 29px; }
.dlg-body { padding: 8px 5px 0 4px; }
.d-l { line-height: 13px; }
.d-search { display: flex; margin: 4px 0 0 7px; }
.d-text { width: 250px; height: 25px; background: #fff; border: 1px solid #cfcfcf; padding: 2px 2px 0 1px; line-height: 10.5px; letter-spacing: -.03px; white-space: nowrap; }
.d-btn { width: 59px; height: 18px; background: #e1e1e1; border: 1px solid #adadad; text-align: center; line-height: 16px; flex: none; }
.d-search .d-btn { margin-left: 7px; height: 24px; line-height: 22px; }
.d-cat { display: flex; align-items: center; margin: 4px 0 0 7px; height: 16px; }
.d-cat > span { width: 100px; white-space: nowrap; }
.d-sel { width: 149px; height: 16px; background: #fff; border: 1px solid #adadad; display: flex; justify-content: space-between; align-items: center; padding-left: 2px; }
.d-sel i { width: 16px; height: 14px; background: #e1e1e1; display: flex; align-items: center; justify-content: center; }
.d-name { margin-top: 6px; }
.d-list { margin: 4px 0 0 7px; width: 316px; height: 77px; background: #fff; border: 1px solid #9a9a9a; display: flex; padding: 1px; }
.d-items { width: 300px; }
.d-items div { height: 10.3px; line-height: 10.3px; padding-left: 2px; letter-spacing: -.15px; }
.d-items .on { background: #0078d7; color: #fff; }
.d-sb { flex: 1; display: flex; flex-direction: column; align-items: center; padding-top: 4px; position: relative; }
.d-sb i { width: 12px; height: 14px; background: #cdcdcd; margin-top: 6px; }
.d-sb svg:last-child { margin-top: auto; margin-bottom: 4px; }
.d-sig { margin: 2px 0 0 7px; font-weight: 700; line-height: 11px; letter-spacing: -.25px; }
.d-desc { margin: 1px 0 0 7px; line-height: 10.5px; white-space: nowrap; }
.d-foot { display: flex; align-items: center; margin-top: 34px; padding-top: 8px; border-top: 1px solid #dcdcdc; margin-left: -1px; }
.d-link { color: #0a5fb4; text-decoration: underline; margin-right: auto; margin-left: 1px; }
.d-btn.ok { border: 2px solid #2a6bb0; margin-right: 8px; line-height: 14px; }
.spot { position: absolute; left: 97px; top: 150px; width: 44px; height: 44px; border-radius: 50%; background: rgba(250,250,90,.55); }
.pointer { position: absolute; left: 113px; top: 158px; }
```
